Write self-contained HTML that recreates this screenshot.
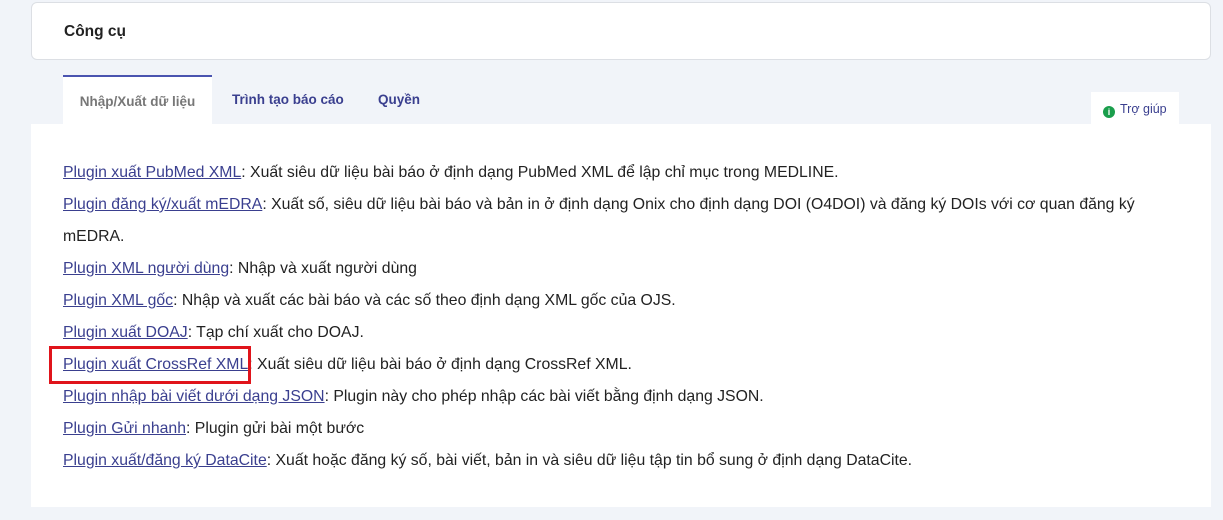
<!DOCTYPE html>
<html><head><meta charset="utf-8"><style>
body{margin:0;background:#f1f4f9;width:1223px;height:520px;overflow:hidden;font-family:"Liberation Sans","Noto Sans CJK SC",sans-serif;position:relative}
.card{position:absolute;left:31px;top:2px;width:1178px;height:56px;background:#fff;border:1px solid #dcdfe4;border-radius:6px}
.card b{position:absolute;left:32px;top:20px;font-size:15.5px;color:#222}
.tab{position:absolute;top:75px;height:49px;font-size:13.5px;font-weight:bold;color:#3a3f8f;line-height:50px}
.act{left:63px;width:149px;background:#fff;border-top:2px solid #4a54b0;color:#777;text-align:center;height:47px;line-height:50px}
.help{position:absolute;left:1091px;top:92px;width:88px;height:32px;background:#fff;font-size:12.5px;color:#3a3f8f;line-height:34px}
.help i{display:inline-block;width:12px;height:12px;border-radius:50%;background:#1a9e4c;margin:0 5px 0 12px;vertical-align:-2px;color:#fff;font-size:9px;font-style:normal;text-align:center;line-height:12px;font-weight:bold}
.panel{position:absolute;left:31px;top:124px;width:1180px;height:383px;background:#fff}
.list{position:absolute;left:63px;top:157px;font-size:15.8px;line-height:32px;color:#222;width:1100px}
.list a{color:#3a3f8f;text-decoration:underline}
.red{position:absolute;left:49px;top:346px;width:196px;height:32px;border:3px solid #e0141b}
</style></head><body>
<div class="card"><b>Công cụ</b></div>
<div class="tab act">Nhập/Xuất dữ liệu</div>
<div class="tab" style="left:232px">Trình tạo báo cáo</div>
<div class="tab" style="left:378px">Quyền</div>
<div class="help"><i>i</i>Trợ giúp</div>
<div class="panel"></div>
<div class="list">
<a>Plugin xuất PubMed XML</a>: Xuất siêu dữ liệu bài báo ở định dạng PubMed XML để lập chỉ mục trong MEDLINE.<br>
<a>Plugin đăng ký/xuất mEDRA</a>: Xuất số, siêu dữ liệu bài báo và bản in ở định dạng Onix cho định dạng DOI (O4DOI) và đăng ký DOIs với cơ quan đăng ký mEDRA.<br>
<a>Plugin XML người dùng</a>: Nhập và xuất người dùng<br>
<a>Plugin XML gốc</a>: Nhập và xuất các bài báo và các số theo định dạng XML gốc của OJS.<br>
<a>Plugin xuất DOAJ</a>: Tạp chí xuất cho DOAJ.<br>
<a>Plugin xuất CrossRef XML</a>: Xuất siêu dữ liệu bài báo ở định dạng CrossRef XML.<br>
<a>Plugin nhập bài viết dưới dạng JSON</a>: Plugin này cho phép nhập các bài viết bằng định dạng JSON.<br>
<a>Plugin Gửi nhanh</a>: Plugin gửi bài một bước<br>
<a>Plugin xuất/đăng ký DataCite</a>: Xuất hoặc đăng ký số, bài viết, bản in và siêu dữ liệu tập tin bổ sung ở định dạng DataCite.
</div>
<div class="red"></div>
</body></html>
